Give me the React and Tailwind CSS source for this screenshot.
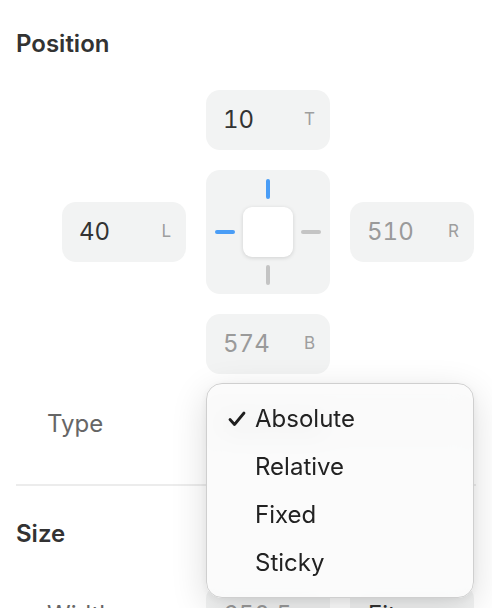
import React from "react";

function Field({ value, label, muted }) {
  return (
    <div className="flex h-[60px] w-[124px] items-center justify-between rounded-[14px] bg-[#f2f3f3] pl-[17px] pr-[15px]">
      <span className={`text-[24px] tabular-nums ${muted ? "text-[#9a9a9a]" : "text-[#333]"}`}>{value}</span>
      <span className="text-[17px] text-[#9e9e9e]">{label}</span>
    </div>
  );
}

function Check() {
  return (
    <svg width="18" height="16" viewBox="0 0 18 16" className="shrink-0">
      <path d="M2 8.5 L6.5 13.5 L16 2" fill="none" stroke="#1f1f1f" strokeWidth="2.8" strokeLinecap="round" strokeLinejoin="round" />
    </svg>
  );
}

export default function App() {
  const items = ["Absolute", "Relative", "Fixed", "Sticky"];
  return (
    <div className="relative h-[608px] w-[492px] overflow-hidden bg-white font-['Inter',sans-serif]">
      <h2 className="pl-4 pt-[30px] text-[24px] font-semibold leading-[28px] text-[#333]">Position</h2>

      <div className="ml-[62px] mt-[32px] grid w-[412px] grid-cols-[124px_124px_124px] grid-rows-[60px_124px_60px] gap-5">
        <div />
        <Field value="10" label="T" />
        <div />
        <div className="self-center"><Field value="40" label="L" /></div>
        <div className="flex items-center justify-center gap-2 rounded-[14px] bg-[#f2f3f3]">
          <div className="h-1 w-5 rounded-full bg-[#4a9df6]" />
          <div className="flex flex-col items-center gap-2">
            <div className="h-5 w-1 rounded-full bg-[#4a9df6]" />
            <div className="h-[50px] w-[50px] rounded-[9px] bg-white shadow-[0_1px_4px_rgba(0,0,0,0.14)]" />
            <div className="h-5 w-1 rounded-full bg-[#c4c4c4]" />
          </div>
          <div className="h-1 w-5 rounded-full bg-[#c4c4c4]" />
        </div>
        <div className="self-center"><Field value="510" label="R" muted /></div>
        <div />
        <Field value="574" label="B" muted />
        <div />
      </div>

      <div className="mt-[20px] flex items-center">
        <span className="w-[206px] pl-[47px] text-[24px] text-[#666]">Type</span>
        <div className="flex h-[60px] w-[268px] items-center rounded-[14px] bg-[#f2f3f3] pl-[17px] text-[24px] text-[#333]">Absolute</div>
      </div>

      <div className="ml-4 mt-[30px] h-[2px] w-[460px] bg-[#ececec]" />

      <h2 className="pl-4 pt-[34px] text-[24px] font-semibold leading-[28px] text-[#333]">Size</h2>

      <div className="mt-[37px] flex items-center">
        <span className="w-[206px] pl-[47px] text-[24px] text-[#666]">Width</span>
        <div className="flex h-[60px] w-[124px] items-center rounded-[14px] bg-[#f2f3f3] pl-[17px] text-[24px] tabular-nums text-[#9a9a9a]">650.5</div>
        <div className="ml-5 flex h-[60px] w-[124px] items-center justify-between rounded-[14px] bg-[#f2f3f3] pl-[18px] pr-[20px] text-[24px] text-[#333]">
          <span>Fit</span>
          <span className="text-[14px] text-[#666]">⌄</span>
        </div>
      </div>

      <div className="absolute left-[206px] top-[383px] w-[268px] rounded-[16px] border border-[#cfcfcf] bg-[#fbfbfb]/90 pb-[10px] pt-[11px] shadow-[0_10px_36px_rgba(0,0,0,0.14),0_2px_8px_rgba(0,0,0,0.06)] backdrop-blur-md">
        {items.map((it, i) => (
          <div key={it} className="flex h-12 items-center">
            <div className="flex w-[48px] justify-end pr-[9px]">{i === 0 && <Check />}</div>
            <span className="text-[24px] text-[#222]">{it}</span>
          </div>
        ))}
      </div>
    </div>
  );
}
